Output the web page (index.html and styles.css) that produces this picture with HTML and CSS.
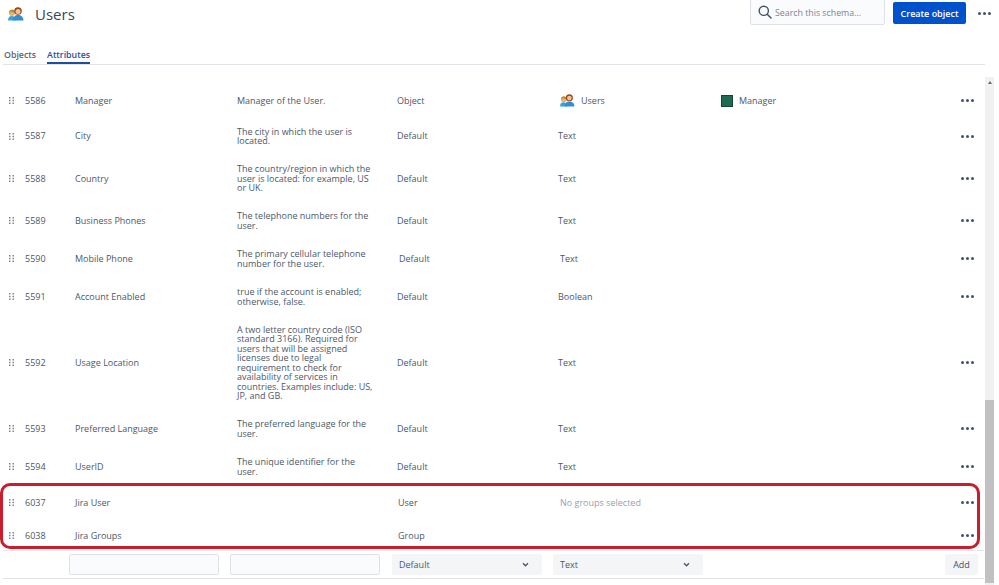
FILE: index.html
```html
<!DOCTYPE html>
<html lang="en">
<head>
<meta charset="utf-8">
<title>Users</title>
<link rel="stylesheet" href="styles.css">
</head>
<body>
<svg class="defs" width="0" height="0" aria-hidden="true">
  <symbol id="people" viewBox="0 0 16 14">
    <path d="M0 13.500c0-3 1.500-4.500 3.500-4.500S7 9.500 7.500 13.500z" fill="#3f9fdc"/>
    <circle cx="4" cy="6" r="3" fill="#eeb06a"/>
    <path d="M1 6C1 3.500 2.500 2.500 4 2.500s3 1 3 3c-1.500 0-3-.5-4-1.500-.3 1-1 1.700-2 2z" fill="#b58a3c"/>
    <path d="M5 13.500c0-3.500 2-5.500 5-5.500s5.500 2 5.500 5.500z" fill="#2f8fd6"/>
    <circle cx="10" cy="4" r="3.800" fill="#9c4318"/>
    <circle cx="10" cy="4.400" r="2.500" fill="#f6c48d"/>
  </symbol>
  <symbol id="grip" viewBox="0 0 5 7">
    <g fill="#7a869a">
      <rect x="0" y="0" width="1.500" height="1.500"/><rect x="3.500" y="0" width="1.500" height="1.500"/>
      <rect x="0" y="2.750" width="1.500" height="1.500"/><rect x="3.500" y="2.750" width="1.500" height="1.500"/>
      <rect x="0" y="5.500" width="1.500" height="1.500"/><rect x="3.500" y="5.500" width="1.500" height="1.500"/>
    </g>
  </symbol>
</svg>
<div class="page">
  <main class="main">
    <header class="topbar">
      <div class="title-group">
        <svg class="title-icon"><use href="#people"/></svg>
        <h1 class="title">Users</h1>
      </div>
      <div class="actions">
        <div class="search">
          <svg class="search-icon" viewBox="0 0 14 14"><circle cx="5.800" cy="5.800" r="4.600" fill="none" stroke="#42526e" stroke-width="1.400"/><path d="M9.200 9.200l3.800 3.800" stroke="#42526e" stroke-width="1.500" stroke-linecap="round"/></svg>
          <span class="search-text">Search this schema...</span>
        </div>
        <button class="primary">Create object</button>
        <span class="dots top-dots"><i></i><i></i><i></i></span>
      </div>
    </header>
    <nav class="tabs">
      <span class="tab">Objects</span>
      <span class="tab tab-active">Attributes</span>
    </nav>
    <section class="rows">
      <div class="row">
        <svg class="grip"><use href="#grip"/></svg><span class="id">5586</span><span class="name">Manager</span><span class="desc">Manager of the User.</span><span class="type">Object</span>
        <span class="value"><svg class="value-icon"><use href="#people"/></svg>Users</span>
        <span class="extra"><i class="swatch"></i><span>Manager</span></span>
        <span class="dots"><i></i><i></i><i></i></span>
      </div>
      <div class="row">
        <svg class="grip"><use href="#grip"/></svg><span class="id">5587</span><span class="name">City</span><span class="desc">The city in which the user is located.</span><span class="type">Default</span>
        <span class="value">Text</span><span class="extra"></span>
        <span class="dots"><i></i><i></i><i></i></span>
      </div>
      <div class="row row-tight">
        <svg class="grip"><use href="#grip"/></svg><span class="id">5588</span><span class="name">Country</span><span class="desc">The country/region in which the user is located: for example, US or UK.</span><span class="type">Default</span>
        <span class="value">Text</span><span class="extra"></span>
        <span class="dots"><i></i><i></i><i></i></span>
      </div>
      <div class="row">
        <svg class="grip"><use href="#grip"/></svg><span class="id">5589</span><span class="name">Business Phones</span><span class="desc">The telephone numbers for the user.</span><span class="type">Default</span>
        <span class="value">Text</span><span class="extra"></span>
        <span class="dots"><i></i><i></i><i></i></span>
      </div>
      <div class="row">
        <svg class="grip"><use href="#grip"/></svg><span class="id">5590</span><span class="name">Mobile Phone</span><span class="desc">The primary cellular telephone number for the user.</span><span class="type shifted">Default</span>
        <span class="value shifted">Text</span><span class="extra"></span>
        <span class="dots"><i></i><i></i><i></i></span>
      </div>
      <div class="row">
        <svg class="grip"><use href="#grip"/></svg><span class="id">5591</span><span class="name">Account Enabled</span><span class="desc">true if the account is enabled; otherwise, false.</span><span class="type">Default</span>
        <span class="value">Boolean</span><span class="extra"></span>
        <span class="dots"><i></i><i></i><i></i></span>
      </div>
      <div class="row row-tight">
        <svg class="grip"><use href="#grip"/></svg><span class="id">5592</span><span class="name">Usage Location</span><span class="desc">A two letter country code (ISO standard 3166). Required for users that will be assigned licenses due to legal requirement to check for availability of services in countries. Examples include: US, JP, and GB.</span><span class="type">Default</span>
        <span class="value">Text</span><span class="extra"></span>
        <span class="dots"><i></i><i></i><i></i></span>
      </div>
      <div class="row">
        <svg class="grip"><use href="#grip"/></svg><span class="id">5593</span><span class="name">Preferred Language</span><span class="desc">The preferred language for the user.</span><span class="type">Default</span>
        <span class="value">Text</span><span class="extra"></span>
        <span class="dots"><i></i><i></i><i></i></span>
      </div>
      <div class="row">
        <svg class="grip"><use href="#grip"/></svg><span class="id">5594</span><span class="name">UserID</span><span class="desc">The unique identifier for the user.</span><span class="type">Default</span>
        <span class="value">Text</span><span class="extra"></span>
        <span class="dots"><i></i><i></i><i></i></span>
      </div>
      <div class="highlighted">
        <div class="row">
          <svg class="grip"><use href="#grip"/></svg><span class="id">6037</span><span class="name">Jira User</span><span class="desc"></span><span class="type nudged">User</span>
          <span class="value muted nudged">No groups selected</span><span class="extra"></span>
          <span class="dots"><i></i><i></i><i></i></span>
        </div>
        <div class="row">
          <svg class="grip"><use href="#grip"/></svg><span class="id">6038</span><span class="name">Jira Groups</span><span class="desc"></span><span class="type nudged">Group</span>
          <span class="value"></span><span class="extra"></span>
          <span class="dots"><i></i><i></i><i></i></span>
        </div>
      </div>
    </section>
    <form class="add-row">
      <input class="field" type="text" aria-label="Name">
      <input class="field" type="text" aria-label="Description">
      <div class="select">Default<svg class="chevron" viewBox="0 0 8 6"><path d="M1 1.500l3 3 3-3" fill="none" stroke="#42526e" stroke-width="1.500"/></svg></div>
      <div class="select">Text<svg class="chevron" viewBox="0 0 8 6"><path d="M1 1.500l3 3 3-3" fill="none" stroke="#42526e" stroke-width="1.500"/></svg></div>
      <button class="add" type="button">Add</button>
    </form>
  </main>
  <aside class="scrollbar">
    <span class="arrow"></span>
    <span class="thumb"></span>
  </aside>
</div>
</body>
</html>
```

FILE: styles.css
```css
html, body {
  margin: 0;
  height: 585px;
  overflow: hidden;
  background: #fff;
}
body {
  font-family: "Open Sans", "Noto Sans", sans-serif;
  font-size: 9px;
  color: #4d5768;
}
.defs { position: absolute; }
.page {
  display: flex;
  height: 585px;
  width: 995px;
}
.main {
  width: 985px;
  flex: none;
  display: flex;
  flex-direction: column;
}
.topbar {
  height: 40px;
  display: flex;
  justify-content: space-between;
  align-items: flex-start;
  padding-left: 8px;
  margin-right: -6px;
  box-sizing: border-box;
}
.title-group {
  display: flex;
  align-items: center;
  gap: 11px;
  height: 28px;
}
.title-icon { width: 16px; height: 14px; margin-top: -1px; }
.title {
  margin: 0;
  font-size: 15px;
  font-weight: 400;
  color: #3b4658;
  line-height: 28px;
}
.actions {
  display: flex;
  align-items: flex-start;
  gap: 8px;
}
.search {
  width: 135px;
  height: 26px;
  margin-top: -1px;
  box-sizing: border-box;
  border: 1px solid #dfe1e6;
  border-radius: 2px;
  background: #fafbfc;
  display: flex;
  align-items: center;
  padding-left: 7px;
  gap: 3px;
}
.search-icon { width: 14px; height: 14px; }
.search-text { color: #7a869a; font-size: 8.800px; padding-top: 2px; }
.primary {
  width: 73px;
  height: 22px;
  margin-top: 2px;
  border: 0;
  border-radius: 2px;
  background: #0052cc;
  color: #fff;
  font: 600 9px "Open Sans", sans-serif;
  padding: 0;
}
.dots {
  display: flex;
  gap: 2px;
  align-items: center;
  flex: none;
}
.dots i {
  width: 3px;
  height: 3px;
  border-radius: 50%;
  background: #42526e;
}
.top-dots { margin: 12px 0 0 4px; width: 13px; }
.tabs {
  height: 25px;
  margin-left: 3px;
  border-bottom: 1px solid #e1e3e8;
  display: flex;
  gap: 11px;
  padding-left: 1px;
  box-sizing: border-box;
}
.tab {
  line-height: 31px;
  height: 24px;
  font-weight: 600;
  font-size: 8.800px;
  color: #5a6474;
}
.tab-active {
  color: #2a4f9e;
  border-bottom: 2px solid #1f4f9c;
  box-sizing: border-box;
}
.rows { padding-top: 19px; }
.row {
  display: flex;
  align-items: center;
  min-height: 33px;
  line-height: 9.500px;
  padding-left: 9px;
  padding-right: 11px;
  box-sizing: border-box;
  position: relative;
}
.grip { width: 5px; height: 7px; flex: none; }
.id { width: 50px; margin-left: 11px; flex: none; }
.name { width: 162px; flex: none; }
.desc {
  width: 138px;
  margin-right: 22px;
  padding: 9.500px 0;
  flex: none;
}
.row-tight .desc { padding: 9px 0; }
.type { width: 161px; flex: none; }
.value {
  width: 163px;
  flex: none;
  display: flex;
  align-items: center;
  gap: 6px;
}
.extra {
  flex: 1;
  display: flex;
  align-items: center;
  gap: 6px;
}
.shifted { position: relative; left: 2px; }
.nudged { position: relative; left: 1px; }
.muted { color: #97a0af; position: relative; left: 2px; }
.value-icon { width: 15px; height: 13px; margin: -1px 0 0 2px; }
.swatch {
  width: 12px;
  height: 12px;
  background: #1e6a52;
  border: 1px solid #17423a;
  box-sizing: border-box;
}
.highlighted { position: relative; margin-top: 1px; }
.highlighted .row { min-height: 32.500px; }
.highlighted::after {
  content: "";
  position: absolute;
  top: -4px;
  bottom: 2.500px;
  left: 0;
  right: 5px;
  border: 3px solid #c81e2e;
  border-radius: 10px;
  box-sizing: border-box;
  pointer-events: none;
}
.add-row {
  margin: -2px 1px 0 3px;
  border-top: 1px solid #e8eaee;
  border-bottom: 1px solid #dfe1e6;
  height: 29px;
  box-sizing: border-box;
  display: flex;
  align-items: center;
  gap: 11px;
  padding: 0 6px 0 66px;
}
.field {
  width: 150px;
  height: 21px;
  box-sizing: border-box;
  border: 1px solid #dfe1e6;
  border-radius: 2px;
  background: #fafbfc;
  padding: 0;
  margin: 0;
}
.select {
  width: 150px;
  height: 21px;
  box-sizing: border-box;
  background: #f4f5f7;
  border-radius: 2px;
  padding: 0 13px 0 7px;
  display: flex;
  justify-content: space-between;
  align-items: center;
  margin-left: 1px;
}
.select + .select { margin-left: 0; }
.chevron { width: 7px; height: 5px; }
.add {
  width: 33px;
  height: 21px;
  margin-left: auto;
  border: 0;
  background: #f4f5f7;
  border-radius: 2px;
  color: #42526e;
  font: 9px "Open Sans", sans-serif;
  padding: 0;
}
.scrollbar {
  width: 9px;
  flex: none;
  margin-top: 77px;
  background: #f1f1f1;
  display: flex;
  flex-direction: column;
  align-items: center;
}
.arrow {
  margin-top: 4px;
  width: 0;
  height: 0;
  border-left: 2.500px solid transparent;
  border-right: 2.500px solid transparent;
  border-bottom: 3px solid #6b6b6b;
}
.thumb {
  width: 100%;
  height: 183px;
  margin-top: 316px;
  background: #c1c1c1;
}
```
